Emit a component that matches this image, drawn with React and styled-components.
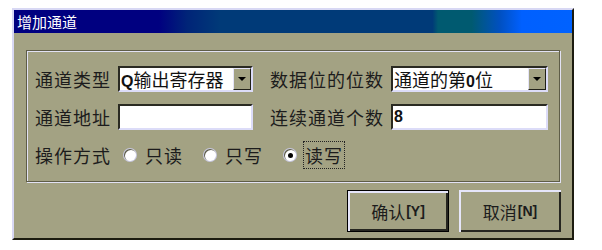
import React from 'react';
import styled, { createGlobalStyle } from 'styled-components';

const GlobalStyle = createGlobalStyle`
  body {
    margin: 0;
    background: #ffffff;
    font-family: "Noto Sans CJK SC", "Liberation Sans", sans-serif;
  }
`;

const Page = styled.div`
  padding: 8px 0 0 12px;
`;

const Dialog = styled.div`
  width: 562px;
  height: 232px;
  box-sizing: border-box;
  background: #a3a283;
  border-top: 2px solid #d8d8f4;
  border-left: 2px solid #d8d8f4;
  border-right: 2px solid #1c1c10;
  border-bottom: 2px solid #1c1c10;
  display: flex;
  flex-direction: column;
`;

const TitleBar = styled.div`
  height: 23px;
  padding-left: 3px;
  display: flex;
  align-items: center;
  color: #ffffff;
  font-size: 15px;
  background: linear-gradient(
    to right,
    #000080 0%,
    #000080 26%,
    #002478 31%,
    #003a78 37%,
    #003a78 75%,
    #005a70 76%,
    #005a70 82%,
    #0050c0 87%,
    #0060ff 91%,
    #0062ff 100%
  );
`;

const Body = styled.div`
  flex: 1;
  padding: 17px 12px 0 12px;
  display: flex;
  flex-direction: column;
`;

const Group = styled.div`
  height: 132px;
  box-sizing: border-box;
  border: 1px solid #5e5d48;
  box-shadow: 1px 1px 0 #e2e2f4, inset 1px 1px 0 #e2e2f4;
  padding: 15px 12px 0 8px;
  display: grid;
  grid-template-columns: 75px 135px 122px 157px;
  grid-auto-rows: 26px;
  column-gap: 8px;
  row-gap: 12px;
  align-items: center;
`;

const Label = styled.div`
  font-size: 18px;
  color: #1c1c1c;
  white-space: nowrap;
  padding-left: ${(p) => (p.$indent ? '9px' : '0')};
  letter-spacing: 1px;
`;

const Field = styled.div`
  height: 26px;
  box-sizing: border-box;
  background: #ffffff;
  border-top: 2px solid #2a2a22;
  border-left: 2px solid #2a2a22;
  border-right: 2px solid #dcdcf8;
  border-bottom: 2px solid #dcdcf8;
  display: flex;
  align-items: center;
  padding-left: 1px;
  font-size: 18px;
  color: #111111;
  white-space: nowrap;
  overflow: hidden;
`;

const ComboText = styled.span`
  flex: 1;
  overflow: hidden;
`;

const Strong = styled.b`
  font-family: "Liberation Sans", sans-serif;
  font-weight: bold;
  font-size: 16px;
`;

const DropButton = styled.div`
  width: 18px;
  height: 100%;
  box-sizing: border-box;
  background: #a3a283;
  border-top: 1px solid #e4e4f8;
  border-left: 1px solid #e4e4f8;
  border-right: 1px solid #202018;
  border-bottom: 1px solid #202018;
  display: flex;
  align-items: center;
  justify-content: center;
  flex-shrink: 0;

  &::after {
    content: '';
    border-left: 4px solid transparent;
    border-right: 4px solid transparent;
    border-top: 4px solid #000000;
  }
`;

const RadioRow = styled.div`
  grid-column: 2 / 5;
  display: flex;
  align-items: center;
  margin-left: 6px;
  gap: 20px;
`;

const RadioItem = styled.div`
  display: flex;
  align-items: center;
  gap: 8px;
`;

const RadioDot = styled.span`
  width: 12px;
  height: 12px;
  border-radius: 50%;
  background: #ffffff;
  box-shadow: inset 1px 1px 0 #5a5a48, 0 0 0 1px #c8c8e0;
  display: flex;
  align-items: center;
  justify-content: center;

  &::after {
    content: '';
    width: 5px;
    height: 5px;
    border-radius: 50%;
    background: ${(p) => (p.$checked ? '#000000' : 'transparent')};
  }
`;

const RadioText = styled.span`
  font-size: 18px;
  color: #1c1c1c;
  letter-spacing: 1px;
  padding: 0 1px;
  outline: ${(p) => (p.$focus ? '1px dotted #222222' : 'none')};
`;

const Footer = styled.div`
  display: flex;
  justify-content: flex-end;
  gap: 10px;
  padding-top: 8px;
  margin-right: -1px;
`;

const Button = styled.button`
  width: 102px;
  height: 42px;
  box-sizing: border-box;
  background: #a3a283;
  font-family: "Noto Sans CJK SC", sans-serif;
  font-size: 17px;
  color: #1c1c1c;
  border: ${(p) => (p.$default ? '1px solid #000000' : 'none')};
  box-shadow: inset 2px 2px 0 #e6e6fa, inset -2px -2px 0 #262620;
  display: flex;
  align-items: center;
  justify-content: center;
  padding: 0;
`;

const Key = styled.b`
  font-family: "Liberation Sans", sans-serif;
  font-size: 14px;
  font-weight: bold;
  margin-left: 1px;
`;

const App = () => {
  return (
    <>
      <GlobalStyle />
      <Page>
        <Dialog>
          <TitleBar>增加通道</TitleBar>
          <Body>
            <Group>
              <Label>通道类型</Label>
              <Field>
                <ComboText><Strong>Q</Strong>输出寄存器</ComboText>
                <DropButton />
              </Field>
              <Label $indent>数据位的位数</Label>
              <Field>
                <ComboText>通道的第<Strong>0</Strong>位</ComboText>
                <DropButton />
              </Field>

              <Label>通道地址</Label>
              <Field />
              <Label $indent>连续通道个数</Label>
              <Field><Strong>8</Strong></Field>

              <Label>操作方式</Label>
              <RadioRow>
                <RadioItem>
                  <RadioDot />
                  <RadioText>只读</RadioText>
                </RadioItem>
                <RadioItem>
                  <RadioDot />
                  <RadioText>只写</RadioText>
                </RadioItem>
                <RadioItem>
                  <RadioDot $checked />
                  <RadioText $focus>读写</RadioText>
                </RadioItem>
              </RadioRow>
            </Group>
            <Footer>
              <Button $default>确认<Key>[Y]</Key></Button>
              <Button>取消<Key>[N]</Key></Button>
            </Footer>
          </Body>
        </Dialog>
      </Page>
    </>
  );
};

export default App;
